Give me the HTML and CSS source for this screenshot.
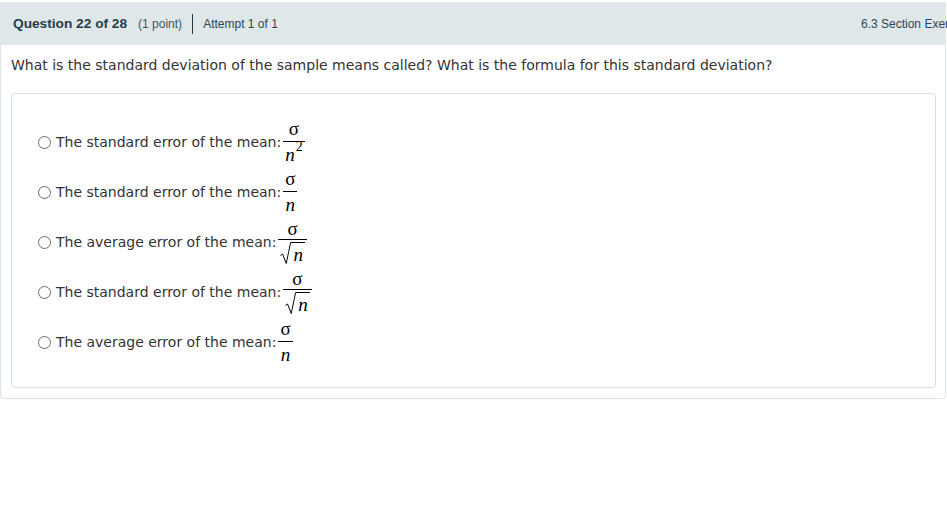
FILE: index.html
```html
<!DOCTYPE html>
<html lang="en">
<head>
  <meta charset="UTF-8">
  <meta name="viewport" content="width=device-width, initial-scale=1">
  <title>Question 22 of 28</title>
  <link rel="stylesheet" href="styles.css">
</head>
<body>
  <div class="question-panel">
    <!-- Header bar -->
    <div class="question-header">
      <span class="q-number">Question 22 of 28</span>
      <span class="q-points">(1 point)</span>
      <span class="q-divider"></span>
      <span class="q-attempt">Attempt 1 of 1</span>
      <span class="q-section">6.3 Section Exercises</span>
    </div>

    <div class="question-body">
      <p class="question-text">What is the standard deviation of the sample means called? What is the formula for this standard deviation?</p>

      <!-- Answer choices -->
      <ul class="answer-box">
        <li class="option">
          <span class="radio"></span>
          <span class="label">The standard error of the mean:</span>
          <span class="frac">
            <span class="num">σ</span>
            <span class="den"><i>n</i><sup>2</sup></span>
          </span>
        </li>
        <li class="option">
          <span class="radio"></span>
          <span class="label">The standard error of the mean:</span>
          <span class="frac">
            <span class="num">σ</span>
            <span class="den"><i>n</i></span>
          </span>
        </li>
        <li class="option">
          <span class="radio"></span>
          <span class="label">The average error of the mean:</span>
          <span class="frac frac-root">
            <span class="num">σ</span>
            <span class="den">
              <span class="sqrt">
                <svg class="radical" viewBox="0 0 12 22" preserveAspectRatio="none"><path d="M0.5 13.5 L2.8 12 L6.8 21.5 L11.6 0.5 H12" fill="none" stroke="#000" stroke-width="1"/></svg>
                <i class="radicand">n</i>
              </span>
            </span>
          </span>
        </li>
        <li class="option">
          <span class="radio"></span>
          <span class="label">The standard error of the mean:</span>
          <span class="frac frac-root">
            <span class="num">σ</span>
            <span class="den">
              <span class="sqrt">
                <svg class="radical" viewBox="0 0 12 22" preserveAspectRatio="none"><path d="M0.5 13.5 L2.8 12 L6.8 21.5 L11.6 0.5 H12" fill="none" stroke="#000" stroke-width="1"/></svg>
                <i class="radicand">n</i>
              </span>
            </span>
          </span>
        </li>
        <li class="option">
          <span class="radio"></span>
          <span class="label">The average error of the mean:</span>
          <span class="frac">
            <span class="num">σ</span>
            <span class="den"><i>n</i></span>
          </span>
        </li>
      </ul>
    </div>
  </div>
</body>
</html>
```

FILE: styles.css
```css
body {
  margin: 2px 0 0 0;
  background: #fff;
  font-family: "DejaVu Sans", Verdana, sans-serif;
  color: #333;
  overflow: hidden;
}

.question-panel {
  width: 944px;
  border: 1px solid #dde4e6;
  border-top: none;
  border-radius: 0 0 4px 4px;
}

/* Header bar */
.question-header {
  display: flex;
  align-items: center;
  height: 43px;
  width: 946px;
  margin-left: -1px;
  padding-left: 13px;
  box-sizing: border-box;
  background: #e0e7e9;
  font-family: "Liberation Sans", Arial, sans-serif;
  white-space: nowrap;
}

.q-number {
  font-size: 13.7px;
  font-weight: bold;
  color: #1f3e4e;
}

.q-points {
  margin-left: 11px;
  font-size: 12px;
  color: #3d5563;
}

.q-divider {
  width: 1px;
  height: 20px;
  margin: 0 10px;
  background: #2a3a44;
}

.q-attempt {
  font-size: 12px;
  color: #2f4654;
}

.q-section {
  margin-left: auto;
  width: 85px;
  font-size: 12px;
  color: #2f4654;
}

/* Body */
.question-body {
  padding: 12px 9px 10px 10px;
}

.question-text {
  margin: 0 0 20px 0;
  font-size: 14px;
  line-height: 16px;
}

.answer-box {
  list-style: none;
  margin: 0;
  padding: 23px 0 20px 26px;
  border: 1px solid #d9e1e3;
  border-radius: 4px;
}

.option {
  display: flex;
  align-items: center;
  height: 50px;
  font-size: 14px;
}

.radio {
  width: 11px;
  height: 11px;
  margin-right: 5px;
  border: 1px solid #6b6b6b;
  border-radius: 50%;
  flex: 0 0 auto;
}

.label {
  margin-right: 2px;
}

/* Math fractions */
.frac {
  display: inline-flex;
  flex-direction: column;
  align-items: center;
  font-family: "Liberation Serif", "Times New Roman", serif;
  font-size: 19px;
  color: #000;
}

.frac .num {
  line-height: 15px;
  padding: 0 2px 5px;
}

.frac .den {
  display: flex;
  align-items: flex-start;
  justify-content: center;
  align-self: stretch;
  border-top: 1px solid #000;
  padding: 5px 2px 0;
  line-height: 16px;
}

.frac-root .num {
  padding-bottom: 3px;
}

.frac-root .den {
  padding-top: 2px;
}

.frac sup {
  font-style: normal;
  font-size: 14px;
  line-height: 10px;
  margin-top: -5px;
  margin-left: 1px;
}

.sqrt {
  display: inline-flex;
  align-items: stretch;
  height: 22px;
}

.radical {
  width: 11px;
  height: 22px;
}

.radicand {
  display: block;
  border-top: 1px solid #000;
  padding: 4px 2px 0 2px;
  line-height: 16px;
}
```
